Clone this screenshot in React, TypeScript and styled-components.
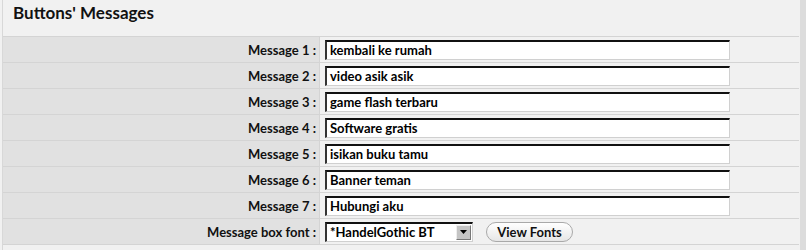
import styled, { createGlobalStyle } from 'styled-components';

const GlobalStyle = createGlobalStyle`
    body {
        margin: 0;
        background: #f1f1f1;
        font-family: Lato, 'Liberation Sans', sans-serif;
    }
`;

const messages = [
    'kembali ke rumah',
    'video asik asik',
    'game flash terbaru',
    'Software gratis',
    'isikan buku tamu',
    'Banner teman',
    'Hubungi aku',
];

const Page = styled.div`
    width: 806px;
    height: 250px;
    display: flex;
    background: #f1f1f1;
    overflow: hidden;
`;

const Panel = styled.div`
    width: 797px;
    margin-left: 2px;
    border-left: 1px solid #d8d8d8;
    display: flex;
    flex-direction: column;
`;

const Stripe = styled.div`
    width: 6px;
    margin-left: 1px;
    background: #dcdcdc;
`;

const Header = styled.div`
    height: 37px;
    padding-left: 10px;
    padding-top: 2px;
    box-sizing: border-box;
    border-bottom: 1px solid #d4d4d4;
`;

const Title = styled.h2`
    margin: 0;
    font-size: 17px;
    font-weight: 700;
    color: #111;
`;

const Row = styled.div`
    display: grid;
    grid-template-columns: 317px 1fr;
    height: 26px;
    box-sizing: border-box;
    border-bottom: 1px solid #d4d4d4;
`;

const Label = styled.div`
    background: #e1e1e1;
    display: flex;
    align-items: center;
    justify-content: flex-end;
    padding-right: 3px;
    font-size: 13px;
    font-weight: 700;
    color: #111;
    border-right: 1px solid #d4d4d4;
`;

const Value = styled.div`
    display: flex;
    align-items: center;
    gap: 13px;
    padding-left: 5px;
`;

const TextBox = styled.div`
    width: 405px;
    height: 20px;
    box-sizing: border-box;
    background: #fff;
    border-top: 2px solid #111;
    border-left: 2px solid #333;
    border-right: 1px solid #d0d0d0;
    border-bottom: 1px solid #d0d0d0;
    padding-left: 3px;
    display: flex;
    align-items: center;
    font-size: 13px;
    font-weight: 700;
    color: #000;
`;

const Select = styled(TextBox)`
    width: 148px;
    padding-right: 1px;
    justify-content: space-between;
`;

const Arrow = styled.div`
    width: 15px;
    height: 15px;
    background: #c4c4c4;
    border-top: 1px solid #eee;
    border-left: 1px solid #eee;
    border-right: 1px solid #777;
    border-bottom: 1px solid #777;
    box-sizing: border-box;
    display: flex;
    align-items: center;
    justify-content: center;
`;

const Button = styled.button`
    height: 20px;
    width: 87px;
    border-radius: 10px;
    border: 1px solid #a9a9a9;
    background: linear-gradient(#ffffff, #e6e6e6);
    font-family: inherit;
    font-size: 13px;
    font-weight: 700;
    color: #111;
    padding: 0;
`;

const App = () => {
    return (
        <Page>
            <GlobalStyle />
            <Panel>
                <Header>
                    <Title>Buttons' Messages</Title>
                </Header>
                {messages.map((text, index) => (
                    <Row key={index}>
                        <Label>Message {index + 1} :</Label>
                        <Value>
                            <TextBox>{text}</TextBox>
                        </Value>
                    </Row>
                ))}
                <Row>
                    <Label>Message box font :</Label>
                    <Value>
                        <Select>
                            *HandelGothic BT
                            <Arrow>
                                <svg width="7" height="4" viewBox="0 0 7 4">
                                    <path d="M0 0h7L3.5 4z" fill="#000" />
                                </svg>
                            </Arrow>
                        </Select>
                        <Button>View Fonts</Button>
                    </Value>
                </Row>
            </Panel>
            <Stripe />
        </Page>
    );
};

export default App;
